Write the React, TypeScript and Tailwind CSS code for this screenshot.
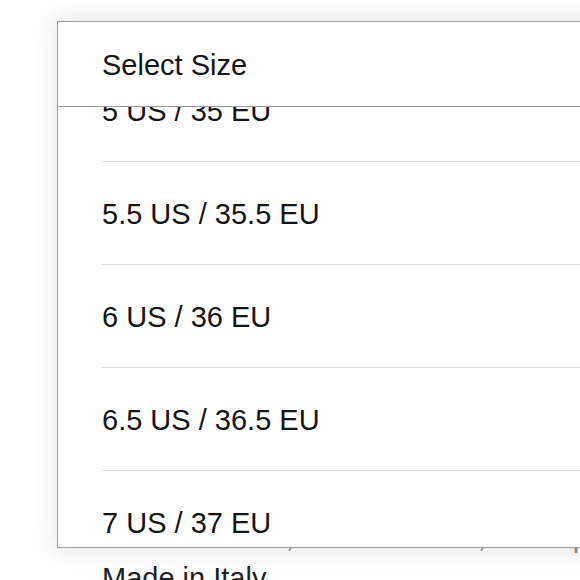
import React from "react";

const sizes = [
  "5 US / 35 EU",
  "5.5 US / 35.5 EU",
  "6 US / 36 EU",
  "6.5 US / 36.5 EU",
  "7 US / 37 EU",
  "7.5 US / 37.5 EU",
];

export default function App() {
  return (
    <div
      className="relative w-[580px] h-[580px] overflow-hidden bg-white"
      style={{ fontFamily: '"Liberation Sans", Arial, sans-serif' }}
    >
      {/* page content behind the dropdown */}
      <div className="pl-[102px] pt-[517px] text-[29px] leading-[40px]">
        <p className="text-[#8a8a8a] whitespace-nowrap">Sole in leather, heel in rubber, lace-up closure</p>
        <p className="text-[#222] mt-[1px]">Made in Italy</p>
      </div>

      {/* dropdown overlay */}
      <div className="absolute z-10 left-[57px] top-[21px] w-[640px] h-[527px] border border-[#9b9b9b] bg-white shadow-[0_0_22px_rgba(0,0,0,0.13)] flex flex-col text-[#151515]">
        <div className="h-[85px] shrink-0 border-b border-[#9b9b9b] flex items-center pl-[44px] pt-[4px] text-[29px]">
          Select Size
        </div>
        <div className="flex-1 min-h-0 overflow-hidden bg-white">
          <div className="-mt-[48px]">
            {sizes.map((s) => (
              <div
                key={s}
                className="h-[103px] ml-[44px] pt-[3px] border-b border-[#dcdcdc] flex items-center text-[29px]"
              >
                {s}
              </div>
            ))}
          </div>
        </div>
      </div>
    </div>
  );
}
